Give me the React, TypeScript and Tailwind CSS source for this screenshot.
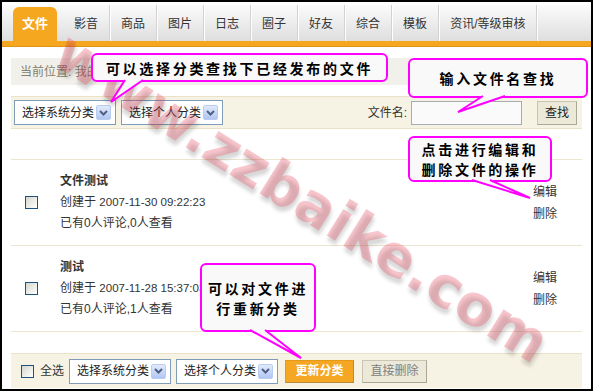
import React from "react";

/* ── Small pieces ─────────────────────────────────────────────── */

const tabs = ["影音", "商品", "图片", "日志", "圈子", "好友", "综合", "模板", "资讯/等级审核"];

function Checkbox() {
  return (
    <span className="block h-[13px] w-[13px] shrink-0 border border-[#1c5180] bg-linear-to-br from-[#d6d6cf] to-white" />
  );
}

function Select({ label }: { label: string }) {
  return (
    <div className="flex h-[25px] w-[102px] shrink-0 items-center border border-[#7f9db9] bg-white pl-[7px] pr-[4px] text-[12px] text-[#222]">
      <span>{label}</span>
      <span className="ml-auto flex h-[15px] w-[15px] items-center justify-center rounded-[2px] border border-[#b9cdf3] bg-linear-to-b from-[#e2eafc] to-[#b1c6f2]">
        <svg width="9" height="6" viewBox="0 0 9 6">
          <path d="M1 1 L4.5 4.5 L8 1" fill="none" stroke="#4d6185" strokeWidth="2" />
        </svg>
      </span>
    </div>
  );
}

function FileRow({ title, date, stats }: { title: string; date: string; stats: string }) {
  return (
    <div className="flex h-[86px] items-center border-b border-[#ece5d0]">
      <div className="ml-[14px]">
        <Checkbox />
      </div>
      <div className="ml-[22px] text-[12px] leading-[21px] text-[#333]">
        <div className="font-bold">{title}</div>
        <div>
          创建于 <span className="text-[11.5px]">{date}</span>
        </div>
        <div>{stats}</div>
      </div>
      <div className="ml-auto mr-[25px] text-[12px] leading-[22px] text-[#333]">
        <div>编辑</div>
        <div>删除</div>
      </div>
    </div>
  );
}

/* ── Callout bubble (overlay) ─────────────────────────────────── */

function Callout({ className, lines }: { className: string; lines: string[] }) {
  return (
    <div
      className={
        "absolute z-20 flex flex-col items-center justify-center rounded-[6px] border-2 border-[#ff00ff] bg-[#f9f9f9] font-['Noto_Sans_CJK_SC',sans-serif] text-[14px] font-bold leading-[20px] tracking-[2.7px] text-black " +
        className
      }
    >
      {lines.map((l) => (
        <div key={l}>{l}</div>
      ))}
    </div>
  );
}

/* ── Page ─────────────────────────────────────────────────────── */

export default function App() {
  return (
    <div className="h-[392px] w-[595px] bg-white font-['Liberation_Sans','Noto_Sans_CJK_SC',sans-serif]">
      <div className="relative h-[391px] w-[593px] overflow-hidden border-2 border-black bg-white">
        {/* tabs */}
        <div className="pt-[3px]">
          <div className="flex h-[36px] bg-linear-to-b from-[#fbfbfb] to-[#dedede] pl-[11px]">
            <div className="mt-[2px] flex w-[44px] items-center justify-center rounded-t-[6px] bg-[#f5a81f] text-[13px] font-bold text-white">
              文件
            </div>
            {tabs.map((t, i) => (
              <div
                key={t}
                className={
                  "flex items-center border-r border-[#d2d2d2] pt-[2px] text-[12px] text-[#333] shadow-[1px_0_0_#ffffff] " +
                  (i === 0 ? "ml-[1px] pl-[16px] pr-[11px]" : "px-[11px]")
                }
              >
                {t}
              </div>
            ))}
          </div>
          <div className="h-[6px] border-b border-[#e09514] bg-[#f5a81f]" />
        </div>

        <div className="px-[9px]">
          {/* breadcrumb */}
          <div className="mt-[11px] flex h-[27px] items-center bg-[#f2f0eb] pl-[9px] text-[12px] text-[#857f6c]">
            当前位置: 我的文件
          </div>

          {/* filter bar */}
          <div className="mt-[11px] flex h-[33px] items-center border-y border-[#e9e2c9] bg-[#f6f3e4] px-[3px]">
            <Select label="选择系统分类" />
            <div className="ml-[5px]">
              <Select label="选择个人分类" />
            </div>
            <span className="ml-auto mr-[4px] text-[12px] text-[#333]">文件名:</span>
            <div className="h-[24px] w-[111px] border border-[#a5acb2] bg-[#fafafa]" />
            <button className="ml-[15px] mr-[2px] h-[24px] w-[40px] border border-[#c9c5b4] border-b-[#aca899] border-r-[#aca899] bg-[#ece9d8] text-[12px] text-[#222]">
              查找
            </button>
          </div>

          {/* list */}
          <div className="mt-[30px] border-t border-[#ece5d0]">
            <FileRow title="文件测试" date="2007-11-30 09:22:23" stats="已有0人评论,0人查看" />
            <FileRow title="测试" date="2007-11-28 15:37:03" stats="已有0人评论,1人查看" />
          </div>

          {/* bottom bar */}
          <div className="mt-[21px] flex h-[35px] items-center border-t border-[#e9e2c9] bg-[#f6f3e4] pl-[10px]">
            <Checkbox />
            <span className="ml-[6px] text-[12px] text-[#333]">全选</span>
            <div className="ml-[5px]">
              <Select label="选择系统分类" />
            </div>
            <div className="ml-[5px]">
              <Select label="选择个人分类" />
            </div>
            <button className="ml-[7px] h-[23px] w-[69px] border border-[#e39a18] border-b-[#b88a3c] border-r-[#b88a3c] bg-[#f5a623] text-[12px] font-bold text-white">
              更新分类
            </button>
            <button className="ml-[8px] h-[23px] w-[65px] border border-[#c9c5b4] border-b-[#aca899] border-r-[#aca899] bg-[#ece9d8] text-[12px] text-[#808080]">
              直接删除
            </button>
          </div>
        </div>

        {/* watermark */}
        <div className="pointer-events-none absolute left-[300px] top-[195px] z-10 -translate-x-1/2 -translate-y-1/2 rotate-[32deg] whitespace-nowrap font-['DejaVu_Sans',sans-serif] text-[57px] font-bold leading-none text-[rgba(232,70,90,0.3)] [text-shadow:3px_4px_4px_rgba(0,0,0,0.16)]">
          www.zzbaike.com
        </div>

        {/* callouts */}
        <Callout className="left-[89px] top-[51px] h-[29px] w-[297px]" lines={["可以选择分类查找下已经发布的文件"]} />
        <Callout className="left-[406px] top-[56px] h-[40px] w-[180px]" lines={["输入文件名查找"]} />
        <Callout className="left-[406px] top-[134px] h-[46px] w-[144px]" lines={["点击进行编辑和", "删除文件的操作"]} />
        <Callout className="left-[198px] top-[261px] h-[69px] w-[116px]" lines={["可以对文件进", "行重新分类"]} />

        {/* callout tails */}
        <svg className="pointer-events-none absolute left-[-2px] top-[-2px] z-30" width="595" height="392" viewBox="0 0 595 392">
          <g fill="#f9f9f9" stroke="#ff00ff" strokeWidth="2">
            <polyline points="125,80 111,102 143,80" />
            <polyline points="483,96 458,112 505,96" />
            <polyline points="472,180 530,198 490,180" />
            <polyline points="250,330 301,358 265,330" />
          </g>
        </svg>
      </div>
    </div>
  );
}
